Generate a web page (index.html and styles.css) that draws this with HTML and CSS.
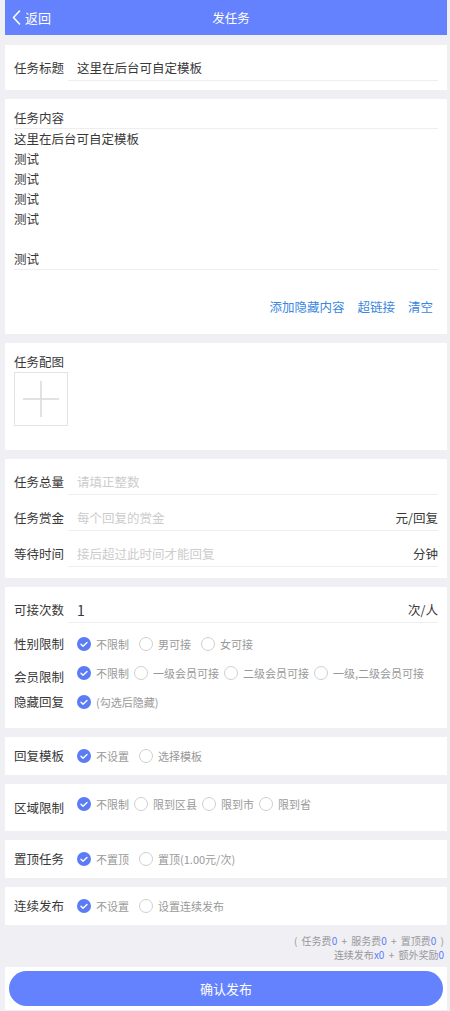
FILE: index.html
```html
<!DOCTYPE html>
<html lang="zh-CN">
<head>
<meta charset="utf-8">
<title>发任务</title>
<link rel="stylesheet" href="styles.css">
</head>
<body>
<div class="page">
  <header class="hdr">
    <div class="back">
      <svg class="chev" viewBox="0 0 9 15" width="9" height="15"><path d="M7.5 1L1.5 7.5l6 6.5" fill="none" stroke="#fff" stroke-width="1.6" stroke-linecap="round" stroke-linejoin="round"/></svg>
      <span>返回</span>
    </div>
    <div class="title">发任务</div>
    <div class="hdr-side"></div>
  </header>

  <main class="main">
    <section class="card">
      <div class="row">
        <div class="lbl">任务标题</div>
        <div class="inp">这里在后台可自定模板</div>
      </div>
    </section>

    <section class="card content">
      <div class="ct-lbl">任务内容</div>
      <div class="ct-text">
        <div>这里在后台可自定模板</div>
        <div>测试</div>
        <div>测试</div>
        <div>测试</div>
        <div>测试</div>
        <div>&nbsp;</div>
        <div>测试</div>
      </div>
      <div class="links">
        <span>添加隐藏内容</span>
        <span>超链接</span>
        <span>清空</span>
      </div>
    </section>

    <section class="card pics">
      <div class="ct-lbl plain">任务配图</div>
      <div class="addbox">
        <svg viewBox="0 0 52 52" width="52" height="52"><path d="M8 26h36M26 8v36" stroke="#d9d9d9" stroke-width="1.5" fill="none"/></svg>
      </div>
    </section>

    <section class="card rows">
      <div class="row">
        <div class="lbl">任务总量</div>
        <div class="inp"><span class="ph">请填正整数</span></div>
      </div>
      <div class="row">
        <div class="lbl">任务赏金</div>
        <div class="inp"><span class="ph">每个回复的赏金</span><span>元/回复</span></div>
      </div>
      <div class="row">
        <div class="lbl">等待时间</div>
        <div class="inp"><span class="ph">接后超过此时间才能回复</span><span>分钟</span></div>
      </div>
    </section>

    <section class="card limits">
      <div class="row">
        <div class="lbl">可接次数</div>
        <div class="inp"><span class="num">1</span><span>次/人</span></div>
      </div>
      <div class="opt-row first">
        <div class="lbl">性别限制</div>
        <div class="opts">
          <span class="opt"><svg class="rd" viewBox="0 0 14 14"><circle cx="7" cy="7" r="7" fill="#5b7cf6"/><path d="M4 7.3l2 1.9 4-3.8" fill="none" stroke="#fff" stroke-width="1.4" stroke-linecap="round" stroke-linejoin="round"/></svg>不限制</span>
          <span class="opt"><span class="rd off"></span>男可接</span>
          <span class="opt"><span class="rd off"></span>女可接</span>
        </div>
      </div>
      <div class="opt-row">
        <div class="lbl low">会员限制</div>
        <div class="opts tight">
          <span class="opt"><svg class="rd" viewBox="0 0 14 14"><circle cx="7" cy="7" r="7" fill="#5b7cf6"/><path d="M4 7.3l2 1.9 4-3.8" fill="none" stroke="#fff" stroke-width="1.4" stroke-linecap="round" stroke-linejoin="round"/></svg>不限制</span>
          <span class="opt"><span class="rd off"></span>一级会员可接</span>
          <span class="opt"><span class="rd off"></span>二级会员可接</span>
          <span class="opt"><span class="rd off"></span>一级,二级会员可接</span>
        </div>
      </div>
      <div class="opt-row">
        <div class="lbl">隐藏回复</div>
        <div class="opts">
          <span class="opt"><svg class="rd" viewBox="0 0 14 14"><circle cx="7" cy="7" r="7" fill="#5b7cf6"/><path d="M4 7.3l2 1.9 4-3.8" fill="none" stroke="#fff" stroke-width="1.4" stroke-linecap="round" stroke-linejoin="round"/></svg>(勾选后隐藏)</span>
        </div>
      </div>
    </section>

    <section class="card single">
      <div class="lbl">回复模板</div>
      <div class="opts">
        <span class="opt"><svg class="rd" viewBox="0 0 14 14"><circle cx="7" cy="7" r="7" fill="#5b7cf6"/><path d="M4 7.3l2 1.9 4-3.8" fill="none" stroke="#fff" stroke-width="1.4" stroke-linecap="round" stroke-linejoin="round"/></svg>不设置</span>
        <span class="opt"><span class="rd off"></span>选择模板</span>
      </div>
    </section>

    <section class="card single tall">
      <div class="lbl">区域限制</div>
      <div class="opts tight raised">
        <span class="opt"><svg class="rd" viewBox="0 0 14 14"><circle cx="7" cy="7" r="7" fill="#5b7cf6"/><path d="M4 7.3l2 1.9 4-3.8" fill="none" stroke="#fff" stroke-width="1.4" stroke-linecap="round" stroke-linejoin="round"/></svg>不限制</span>
        <span class="opt"><span class="rd off"></span>限到区县</span>
        <span class="opt"><span class="rd off"></span>限到市</span>
        <span class="opt"><span class="rd off"></span>限到省</span>
      </div>
    </section>

    <section class="card single">
      <div class="lbl">置顶任务</div>
      <div class="opts">
        <span class="opt"><svg class="rd" viewBox="0 0 14 14"><circle cx="7" cy="7" r="7" fill="#5b7cf6"/><path d="M4 7.3l2 1.9 4-3.8" fill="none" stroke="#fff" stroke-width="1.4" stroke-linecap="round" stroke-linejoin="round"/></svg>不置顶</span>
        <span class="opt"><span class="rd off"></span>置顶(1.00元/次)</span>
      </div>
    </section>

    <section class="card single">
      <div class="lbl">连续发布</div>
      <div class="opts">
        <span class="opt"><svg class="rd" viewBox="0 0 14 14"><circle cx="7" cy="7" r="7" fill="#5b7cf6"/><path d="M4 7.3l2 1.9 4-3.8" fill="none" stroke="#fff" stroke-width="1.4" stroke-linecap="round" stroke-linejoin="round"/></svg>不设置</span>
        <span class="opt"><span class="rd off"></span>设置连续发布</span>
      </div>
    </section>
  </main>

  <div class="fees">
    <div>( 任务费<b>0</b> + 服务费<b>0</b> + 置顶费<b>0</b> )</div>
    <div>连续发布<b>x0</b> + 额外奖励<b>0</b></div>
  </div>

  <div class="bar">
    <button class="submit" type="button">确认发布</button>
  </div>
</div>
</body>
</html>
```

FILE: styles.css
```css
* {
  box-sizing: border-box;
  margin: 0;
  padding: 0;
}

body {
  background: #efeff4;
  font-family: "Noto Sans CJK SC", "Microsoft YaHei", sans-serif;
  color: #383838;
  font-size: 12.5px;
}

.page {
  padding: 0 3px 0 5px;
}

.hdr {
  height: 35px;
  background: #6482fd;
  color: #fff;
  display: grid;
  grid-template-columns: 1fr auto 1fr;
  align-items: center;
}

.back {
  display: flex;
  align-items: center;
  padding-left: 7px;
  gap: 4px;
  font-size: 13px;
}

.chev {
  display: block;
}

.title {
  font-size: 12.5px;
  padding-left: 10px;
}

.main {
  padding-top: 10px;
  display: flex;
  flex-direction: column;
  gap: 9px;
}

.card {
  background: #fff;
  padding: 0 9px 9px;
}

.row {
  display: flex;
  padding-top: 11px;
}

.lbl {
  width: 54px;
  flex: none;
  line-height: 24px;
  white-space: nowrap;
}

.inp {
  flex: 1;
  line-height: 24px;
  border-bottom: 1px solid #eee;
  padding-left: 9px;
  display: flex;
  justify-content: space-between;
}

.ph {
  color: #ccc;
}

.num {
  font-size: 14px;
}

.content {
  padding: 9px 9px 17px;
}

.ct-lbl {
  line-height: 20px;
  border-bottom: 1px solid #eee;
}

.ct-lbl.plain {
  border-bottom: none;
}

.ct-text {
  line-height: 20px;
  border-bottom: 1px solid #eee;
}

.links {
  margin-top: 27px;
  line-height: 20px;
  display: flex;
  justify-content: flex-end;
  gap: 13px;
  padding-right: 5px;
  color: #3b87e0;
}

.pics {
  padding: 9px 9px 24px;
}

.addbox {
  width: 54px;
  height: 54px;
  border: 1px solid #e3e3e3;
}

.addbox svg {
  display: block;
}

.rows {
  padding-bottom: 11px;
}

.limits {
  padding-bottom: 12px;
}

.opt-row {
  display: flex;
  align-items: center;
  height: 29px;
}

.opt-row.first {
  margin-top: 6px;
}

.lbl.low {
  margin-top: 8px;
}

.opts {
  display: flex;
  align-items: center;
  gap: 10px;
  padding-left: 9px;
  color: #999;
  font-size: 11px;
  white-space: nowrap;
}

.opts.tight {
  gap: 5px;
}

.opt {
  display: flex;
  align-items: center;
  gap: 5px;
}

.rd {
  width: 14px;
  height: 14px;
  display: block;
  flex: none;
}

.rd.off {
  border: 1px solid #cfcfcf;
  border-radius: 50%;
}

.single {
  display: flex;
  align-items: center;
  height: 38px;
  padding: 0 9px;
}

.single.tall {
  height: 47px;
}

.opts.raised {
  margin-bottom: 8px;
}

.fees {
  padding: 9px 3px 5px 0;
  text-align: right;
  font-size: 10px;
  line-height: 14px;
  color: #999;
  word-spacing: 2px;
}

.fees b {
  font-weight: normal;
  color: #5b7cf6;
}

.bar {
  background: #fff;
  padding: 4px;
}

.submit {
  display: block;
  width: 100%;
  height: 35px;
  border: none;
  border-radius: 18px;
  background: #6482fd;
  color: #fff;
  font-family: inherit;
  font-size: 13px;
}
```
